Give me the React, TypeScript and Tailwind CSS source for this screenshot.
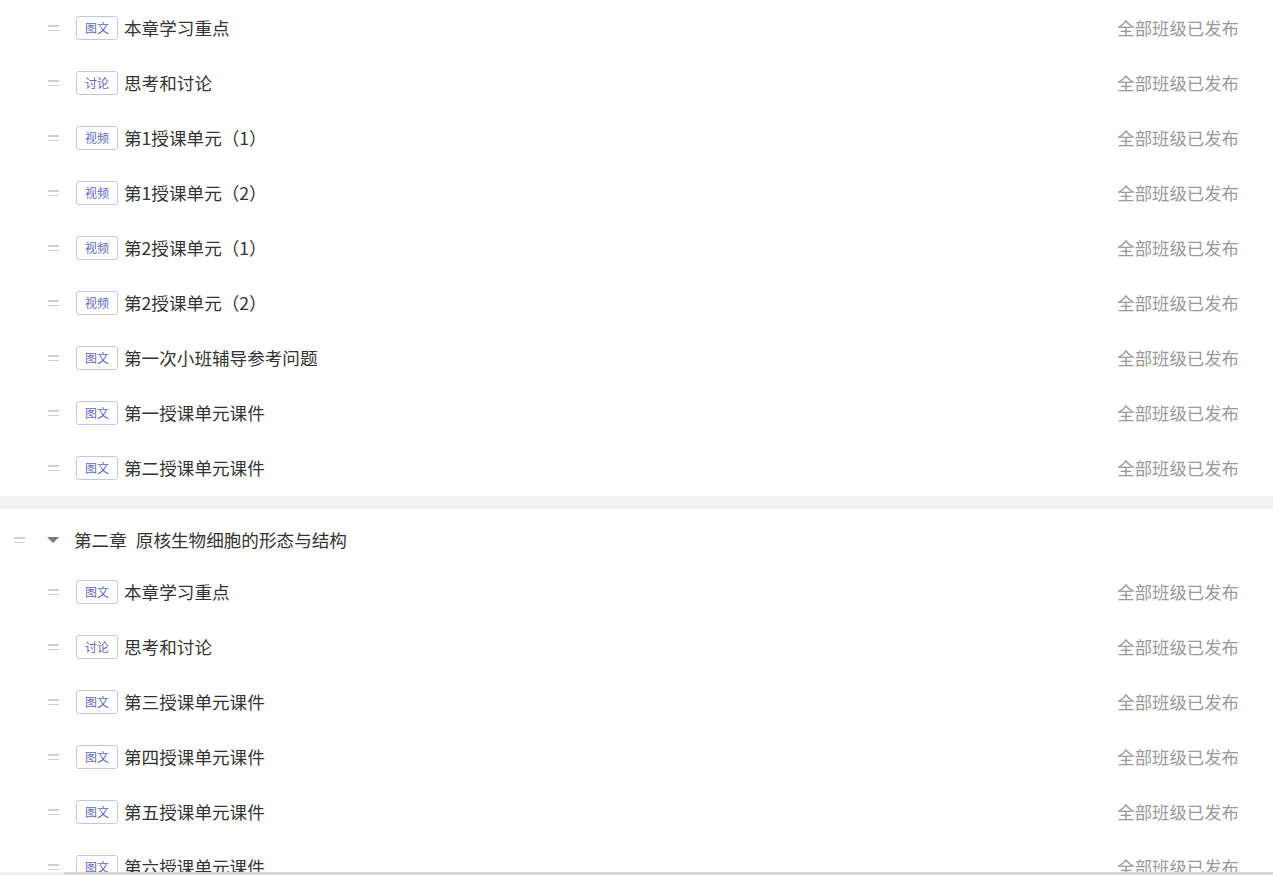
const font = { fontFamily: '"Noto Sans CJK SC", "Liberation Sans", sans-serif' };

type Item = { tag: string; title: string };

const chapterOne: Item[] = [
  { tag: "图文", title: "本章学习重点" },
  { tag: "讨论", title: "思考和讨论" },
  { tag: "视频", title: "第1授课单元（1）" },
  { tag: "视频", title: "第1授课单元（2）" },
  { tag: "视频", title: "第2授课单元（1）" },
  { tag: "视频", title: "第2授课单元（2）" },
  { tag: "图文", title: "第一次小班辅导参考问题" },
  { tag: "图文", title: "第一授课单元课件" },
  { tag: "图文", title: "第二授课单元课件" },
];

const chapterTwo: Item[] = [
  { tag: "图文", title: "本章学习重点" },
  { tag: "讨论", title: "思考和讨论" },
  { tag: "图文", title: "第三授课单元课件" },
  { tag: "图文", title: "第四授课单元课件" },
  { tag: "图文", title: "第五授课单元课件" },
  { tag: "图文", title: "第六授课单元课件" },
  { tag: "图文", title: "第七授课单元课件" },
];

function Handle() {
  return (
    <div className="flex flex-col gap-[3px] w-[11px] shrink-0">
      <span className="h-[1.5px] bg-[#d0d0d0]" />
      <span className="h-[1.5px] bg-[#d0d0d0]" />
    </div>
  );
}

function Row({ item }: { item: Item }) {
  return (
    <div className="h-[55px] flex items-center pl-[48px] pr-[34px] pt-[1px]">
      <Handle />
      <span className="ml-[17px] w-[42px] h-[24px] flex items-center justify-center rounded-[3px] border border-[#c3c6ea] text-[12px] text-[#5f6bbd]">
        {item.tag}
      </span>
      <span className="ml-[6px] text-[17.6px] text-[#333]">{item.title}</span>
      <span className="ml-auto text-[17.4px] text-[#9a9a9a]">全部班级已发布</span>
    </div>
  );
}

export default function App() {
  return (
    <main className="relative h-screen overflow-hidden bg-white" style={font}>
      <section>
        {chapterOne.map((it, i) => (
          <Row key={i} item={it} />
        ))}
      </section>

      <div className="h-[13px] bg-[#f2f2f2] mt-[1px]" />

      {/* 第二章 */}
      <section>
        <div className="h-[55px] flex items-center pl-[14px] pt-[7px]">
          <Handle />
          <span className="ml-[22px] w-0 h-0 border-l-[6px] border-r-[6px] border-t-[6px] border-l-transparent border-r-transparent border-t-[#7a7a7a]" />
          <span className="ml-[15px] text-[17.6px] text-[#333]">第二章</span>
          <span className="ml-[9px] text-[17.6px] text-[#333]">原核生物细胞的形态与结构</span>
        </div>
        {chapterTwo.map((it, i) => (
          <Row key={i} item={it} />
        ))}
      </section>

      {/* horizontal scrollbar */}
      <div className="absolute bottom-0 left-0 right-0 h-[3px] bg-[#efefef]">
        <div className="ml-[64px] h-full bg-[#d6d6d6]" />
      </div>
    </main>
  );
}
